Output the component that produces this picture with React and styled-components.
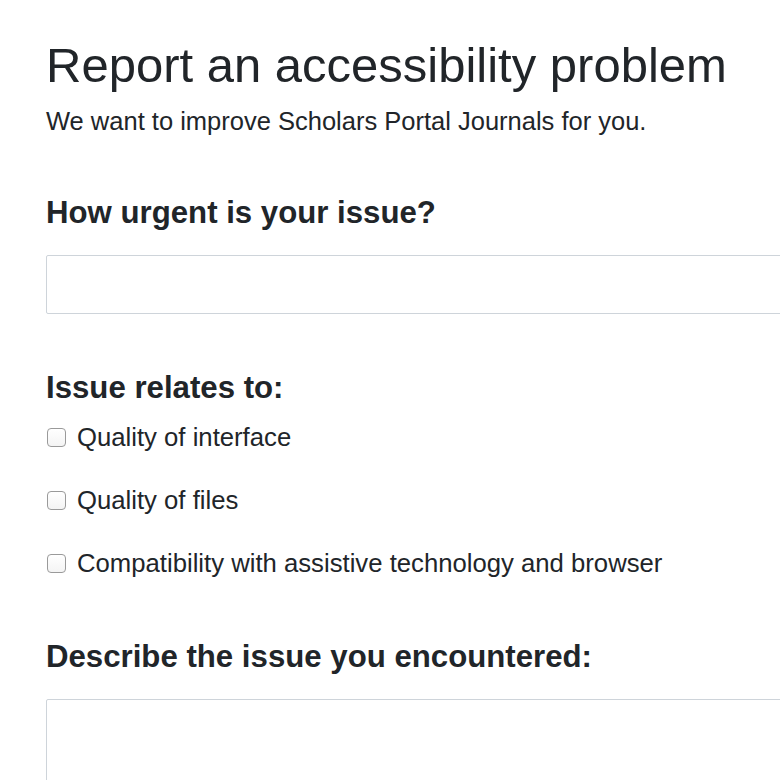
import React from 'react';
import styled, { createGlobalStyle } from 'styled-components';

const GlobalStyle = createGlobalStyle`
  html, body {
    margin: 0;
    padding: 0;
    background: #fff;
    overflow: hidden;
  }
  body {
    font-family: "Liberation Sans", Arial, sans-serif;
    color: #212529;
  }
`;

const Page = styled.main`
  padding: 36px 0 0 46px;
  width: 734px;
  overflow: hidden;
`;

const Title = styled.h1`
  margin: 0;
  font-size: 49px;
  font-weight: 400;
  line-height: 58px;
`;

const Lead = styled.p`
  margin: 9px 0 0;
  font-size: 25.5px;
  line-height: 36px;
`;

const Section = styled.section`
  margin-top: ${p => p.$top}px;
`;

const Heading = styled.h2`
  margin: 0;
  font-size: 31.2px;
  font-weight: 700;
  line-height: 38px;
`;

const TextBox = styled.div`
  box-sizing: border-box;
  width: 800px;
  height: ${p => p.$h}px;
  margin-top: 23px;
  border: 1px solid #ced4da;
  border-radius: 2px;
  background: #fff;
`;

const Options = styled.div`
  display: flex;
  flex-direction: column;
  gap: 31px;
  margin-top: 14px;
`;

const Option = styled.label`
  display: flex;
  align-items: center;
  gap: 11px;
  font-size: 25.7px;
  line-height: 32px;
  height: 32px;
`;

const Box = styled.span`
  box-sizing: border-box;
  flex: none;
  width: 19px;
  height: 19px;
  margin-left: 1px;
  border: 1px solid #9a9a9a;
  border-radius: 4px;
  background: linear-gradient(#fff, #f4f4f4);
`;

const options = [
  'Quality of interface',
  'Quality of files',
  'Compatibility with assistive technology and browser',
];

export default function App() {
  return (
    <Page>
      <GlobalStyle />
      <Title>Report an accessibility problem</Title>
      <Lead>We want to improve Scholars Portal Journals for you.</Lead>

      <Section $top={55}>
        <Heading>How urgent is your issue?</Heading>
        <TextBox $h={59} />
      </Section>

      <Section $top={55}>
        <Heading>Issue relates to:</Heading>
        <Options>
          {options.map(o => (
            <Option key={o}>
              <Box />
              {o}
            </Option>
          ))}
        </Options>
      </Section>

      <Section $top={59}>
        <Heading>Describe the issue you encountered:</Heading>
        <TextBox $h={120} />
      </Section>
    </Page>
  );
}
